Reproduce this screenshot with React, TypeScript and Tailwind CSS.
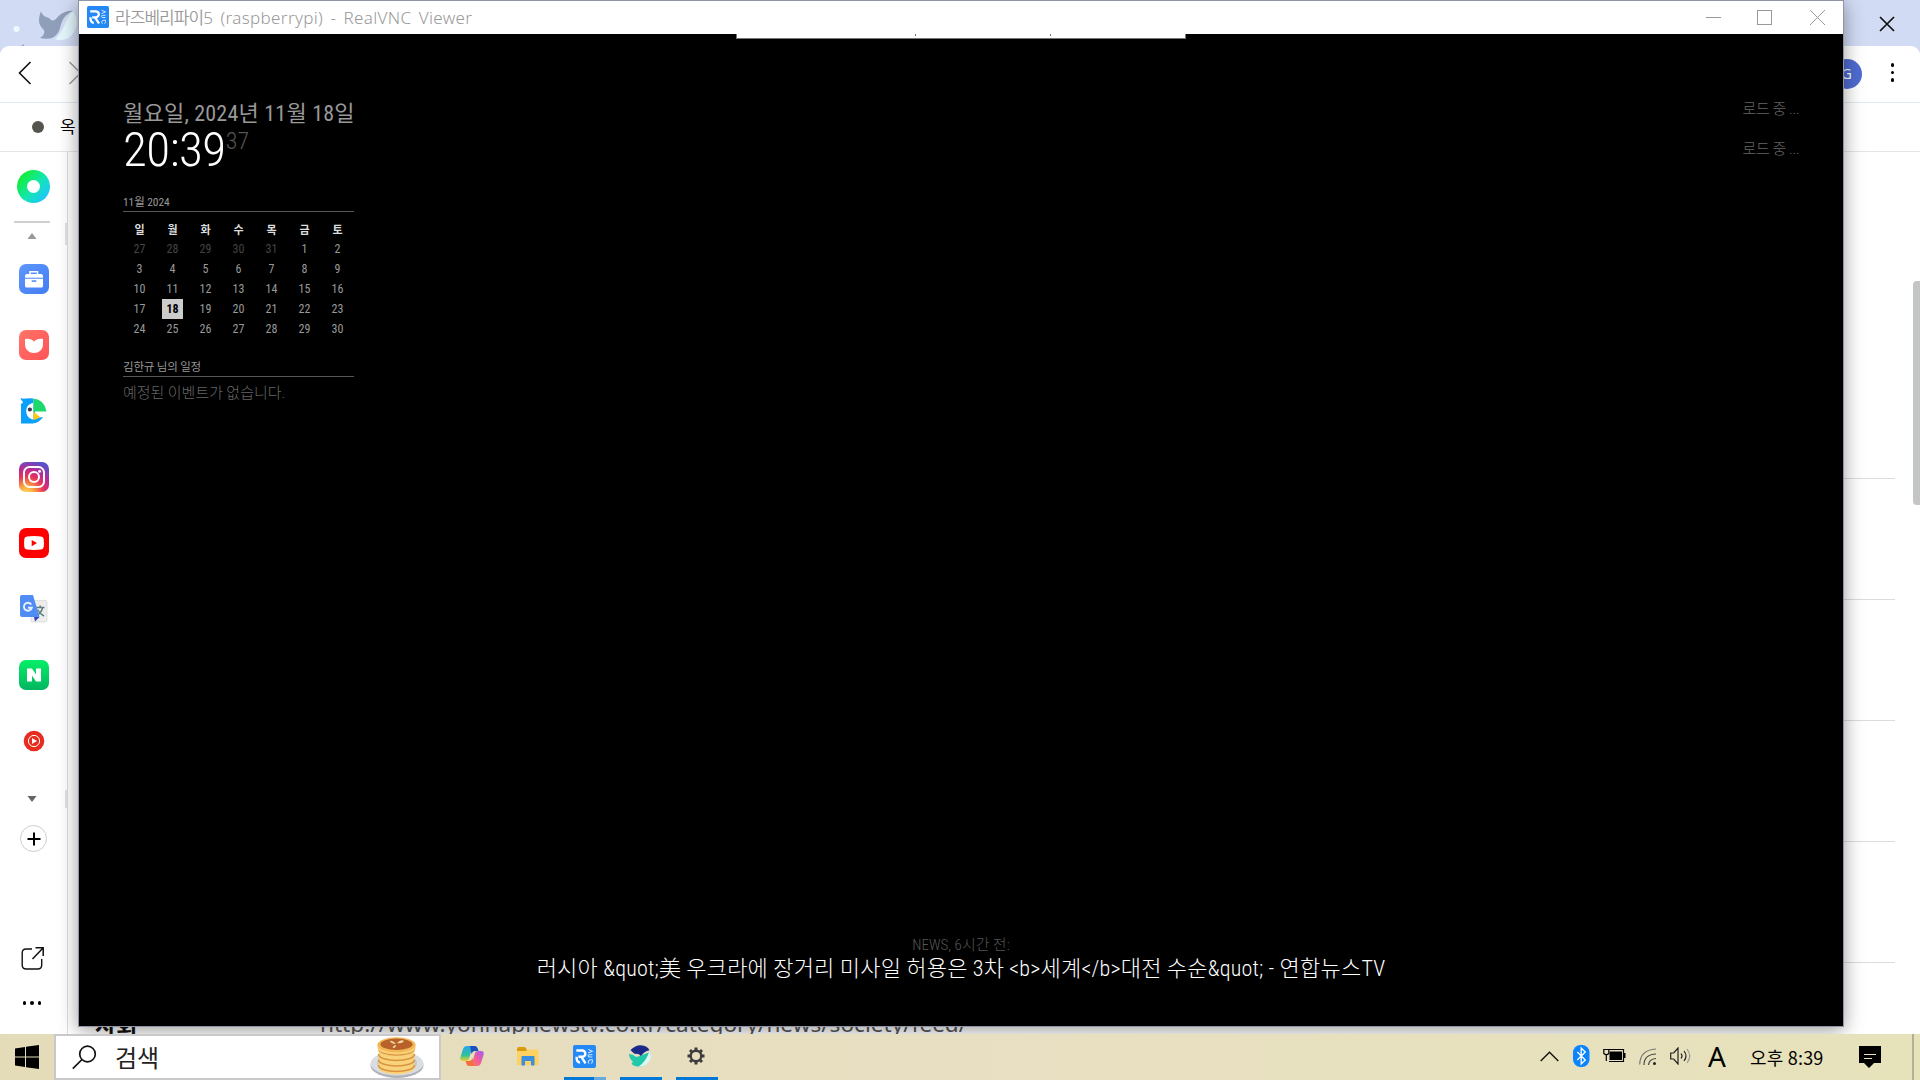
import React from "react";

const cond = "font-['Roboto_Condensed',Roboto,'Noto_Sans_CJK_KR',sans-serif] [font-stretch:75%]";

function VncIcon({ size }: { size: number }) {
  return (
    <svg width={size} height={size} viewBox="0 0 22 22" className="block shrink-0">
      <rect width="22" height="22" rx="1.8" fill="#2489f4" />
      <path d="M3.2 5.3h5.6a2.9 2.9 0 0 1 0 6H5.200M8 11.300l4 6.200M3.400 11.300q0 5.600 3.400 5.600" fill="none" stroke="#fff" strokeWidth="2.300" />
      <path d="M14.500 4.200l4 1.700-4 1.700M18.500 9.300h-2.800q-1.200 0-1.200 1.100t1.200 1.100h2.800M15.500 17.800q-1.500-1.300-.6-2.600t3.600-1v1.500q0 1.500-1 2" fill="none" stroke="#cfe6ff" strokeWidth="1" />
    </svg>
  );
}

function BrowserTop() {
  return (
    <>
      <div className="flex h-[46px] shrink-0 items-center justify-between bg-[#d1dbf3]">
        <svg width="78" height="46" viewBox="0 0 78 46">
          <circle cx="16.500" cy="29" r="3" fill="#e9fbff" />
          <path d="M55 39C64 33 66 16 73 11c8 11 2 28-11 29-3 0-5 0-7-1z" fill="#e4f7fd" />
          <path d="M41 11c-3 8-3 14 3 19 1 4-1 6-4 8 13 3 18-3 20-10 2-8 4-13 13-17-7-1-13 3-17 8-2 2-5 2-7-1-4-1-7-3-8-7z" fill="#8f9eb9" />
          <path d="M20 46q3 0 4-2v2z" fill="#8f9eb9" />
        </svg>
        <svg width="16" height="16" viewBox="0 0 16 16" className="mt-px mr-[25px]">
          <path d="M1 1l14 14M15 1L1 15" stroke="#111" strokeWidth="1.700" />
        </svg>
      </div>
      <div className="h-[57px] shrink-0 bg-[#d1dbf3]">
        <div className="flex h-full items-center justify-between rounded-t-[9px] border-b border-[#e2e8ef] bg-white">
          <svg width="90" height="56" viewBox="0 0 90 56">
            <path d="M30.500 16L19.500 27l11 11" fill="none" stroke="#111" strokeWidth="1.600" />
            <path d="M69.500 16l11 11-11 11" fill="none" stroke="#999" strokeWidth="1.400" />
          </svg>
          <div className="mr-[26px] mb-[1px] flex items-center gap-7">
            <div className="mr-px flex h-[30px] w-[30px] items-center justify-center rounded-full bg-[#4f6bd0] font-['Open_Sans'] text-[15px] text-white">G</div>
            <div className="mb-[2px] flex flex-col gap-1">
              <i className="h-[3.500px] w-[3.500px] rounded-full bg-black" />
              <i className="h-[3.500px] w-[3.500px] rounded-full bg-black" />
              <i className="h-[3.500px] w-[3.500px] rounded-full bg-black" />
            </div>
          </div>
        </div>
      </div>
      <div className="flex h-[49px] shrink-0 items-center border-b border-[#e3e5e6] bg-white pl-8">
        <i className="h-3 w-3 rounded-full bg-[#55544f]" />
        <span className="mb-[3px] ml-4 text-[17px] text-black">옥</span>
      </div>
    </>
  );
}

function Slot({ children }: { children: React.ReactNode }) {
  return <div className="flex h-[66px] w-[68px] shrink-0 items-center justify-center">{children}</div>;
}

function Sidebar() {
  return (
    <div className="flex w-[68px] shrink-0 flex-col border-r border-[#dedede] bg-white">
      <svg width="33" height="33" viewBox="0 0 33 33" className="mt-[18px] ml-[17px] shrink-0">
        <defs>
          <linearGradient id="ring" x1="0.1" y1="0.15" x2="0.9" y2="0.85">
            <stop offset=".1" stopColor="#12ed43" />
            <stop offset=".55" stopColor="#13e6b3" />
            <stop offset="1" stopColor="#1ec4ff" />
          </linearGradient>
        </defs>
        <circle cx="16.500" cy="16.500" r="16.500" fill="url(#ring)" />
        <circle cx="16.500" cy="16.500" r="6.500" fill="#fff" />
      </svg>
      <i className="mt-[18px] ml-[14px] block h-[2px] w-9 shrink-0 bg-[#cfcfcf]" />
      <div className="flex h-[23px] shrink-0 items-start justify-between">
        <svg width="10" height="6" className="mt-[10px] ml-[27px]"><path d="M5 0l4.500 6h-9z" fill="#999" /></svg>
        <i className="h-[22px] w-[2px] bg-[#e2e2e2]" />
      </div>
      <Slot>
        <svg width="30" height="30">
          <defs><linearGradient id="case" x1="0" y1="0" x2="1" y2="1"><stop stopColor="#5f96fb" /><stop offset="1" stopColor="#427df5" /></linearGradient></defs>
          <rect width="30" height="30" rx="7" fill="url(#case)" />
          <path d="M11 10V7.800h7.500V10" fill="none" stroke="#fff" strokeWidth="1.500" />
          <path d="M6 12q0-2 2-2h14q2 0 2 2v2H6zM6 14.700h18V22q0 1.500-1.500 1.500h-15Q6 23.500 6 22z" fill="#fff" />
          <path d="M6 14h18" stroke="#7ba8fb" strokeWidth=".8" />
          <rect x="12.700" y="16.300" width="4.600" height="1.500" fill="#4a86f7" />
        </svg>
      </Slot>
      <Slot>
        <svg width="30" height="30">
          <defs><linearGradient id="coral" x1="0" y1="0" x2="1" y2="1"><stop stopColor="#ff7467" /><stop offset="1" stopColor="#ff5358" /></linearGradient></defs>
          <rect width="30" height="30" rx="7" fill="url(#coral)" />
          <path d="M6 9c4-.5 7 .3 9 2.800 2-2.500 5-3.300 9-2.800v5c0 12-18 12-18 0z" fill="#fff" />
        </svg>
      </Slot>
      <Slot>
        <svg width="30" height="30">
          <path d="M1.500 2q2 1 5.500.6Q10.500 2.200 14.500 2.500V6.500L17 22l7-1q-3.500 5.500-10 6.500H2V8q1.500-.5 2-2-2-1.500-2.500-4z" fill="#0aa0fb" />
          <path d="M14.500 7v16.500C5 22.500 4.500 8 14.500 7z" fill="#fff" />
          <path d="M14.500 2.500q11 1 13 13h-13z" fill="#1fd86d" />
          <path d="M14.500 15.500l6.500 5.500q-3 2.500-6.500 3z" fill="#ffc90c" />
          <circle cx="10.900" cy="13.500" r="2.100" fill="#3c3554" />
        </svg>
      </Slot>
      <Slot>
        <svg width="30" height="30">
          <defs>
            <radialGradient id="insta" cx=".25" cy="1.050" r="1.100">
              <stop offset="0" stopColor="#ffe061" /><stop offset=".25" stopColor="#fba03f" /><stop offset=".52" stopColor="#e83458" /><stop offset=".75" stopColor="#b92a94" /><stop offset="1" stopColor="#5b4fcb" />
            </radialGradient>
          </defs>
          <rect width="30" height="30" rx="7" fill="url(#insta)" />
          <rect x="5" y="5" width="20" height="20" rx="5.500" fill="none" stroke="#fff" strokeWidth="2" />
          <circle cx="15" cy="15" r="5" fill="none" stroke="#fff" strokeWidth="2" />
          <circle cx="20.600" cy="9.400" r="1.400" fill="#fff" />
        </svg>
      </Slot>
      <Slot>
        <svg width="30" height="30">
          <rect width="30" height="30" rx="7" fill="#fe0000" />
          <path d="M8 8.500q7-.8 14 0 2.500.3 2.700 2.500.5 4 0 8-.2 2.200-2.700 2.500-7 .8-14 0-2.500-.3-2.700-2.500-.5-4 0-8Q5.500 8.800 8 8.500z" fill="#fff" />
          <path d="M12.700 12v6.200l5.300-3.100z" fill="#f00" />
        </svg>
      </Slot>
      <Slot>
        <svg width="30" height="30">
          <rect x="12" y="6.500" width="16" height="21.500" rx="1.500" fill="#eceded" stroke="#d6d6d6" strokeWidth=".7" />
          <path d="M17 13.500h8.500M21.200 11.500v2M23.700 13.500q-1.500 6-7 8.500M18.500 15.500q2 4 6.500 6.500" stroke="#607d80" strokeWidth="1.500" fill="none" />
          <path d="M15 23h5.500L16 27.500z" fill="#3a43b8" />
          <path d="M3 1h11l6.500 22H3q-2 0-2-2V3q0-2 2-2z" fill="#4f8df5" />
          <path d="M12.300 10.500a4 4 0 1 0 .5 3.300h-3.800" fill="none" stroke="#e8f0fe" strokeWidth="1.900" />
        </svg>
      </Slot>
      <Slot>
        <svg width="30" height="30">
          <defs><linearGradient id="nv" x1="0" y1="0" x2="0" y2="1"><stop stopColor="#05ee67" /><stop offset="1" stopColor="#03b561" /></linearGradient></defs>
          <rect width="30" height="30" rx="7" fill="url(#nv)" />
          <path d="M8 8.500h5l4 6v-6h5v13h-5l-4-6v6H8z" fill="#fff" />
        </svg>
      </Slot>
      <Slot>
        <svg width="22" height="22">
          <circle cx="11" cy="11" r="10.300" fill="#e62d20" />
          <circle cx="11" cy="11" r="5.600" fill="none" stroke="#fff" strokeWidth="1" />
          <path d="M9 8v6l5-3z" fill="#fff" />
        </svg>
      </Slot>
      <div className="mt-4 flex h-[18px] shrink-0 items-center justify-between">
        <svg width="10" height="6" className="ml-[27px]"><path d="M5 6l4.500-6h-9z" fill="#666" /></svg>
        <i className="h-[18px] w-[2px] bg-[#e2e2e2]" />
      </div>
      <div className="mt-[17px] ml-5 flex h-[27px] w-[27px] shrink-0 items-center justify-center rounded-full border border-[#cdcdcd]">
        <svg width="14" height="14"><path d="M7 0.500v13M.5 7h13" stroke="#000" strokeWidth="2" /></svg>
      </div>
      <svg width="24" height="24" className="mt-[95px] ml-[21px] shrink-0">
        <path d="M11 2H5Q1.200 2 1.200 6v12q0 4 4 4h11.500q4 0 4-4v-6" fill="none" stroke="#111" strokeWidth="1.400" />
        <path d="M14.500.8h7.700V9M22 1L11.500 12" fill="none" stroke="#111" strokeWidth="1.500" />
      </svg>
      <div className="mt-[30px] ml-[22.500px] flex gap-1">
        <i className="h-[3.500px] w-[3.500px] rounded-full bg-black" />
        <i className="h-[3.500px] w-[3.500px] rounded-full bg-black" />
        <i className="h-[3.500px] w-[3.500px] rounded-full bg-black" />
      </div>
    </div>
  );
}

function Page() {
  return (
    <div className="flex min-w-0 flex-1 justify-between bg-white">
      <div className="flex flex-1 flex-col pl-[27px]">
        {[0, 1, 2, 3, 4].map((i) => (
          <div key={i} className={i === 0 ? "h-[327px] w-[1800px] shrink-0 border-b border-[#dcdcdc]" : "h-[121px] w-[1800px] shrink-0 border-b border-[#dcdcdc]"} />
        ))}
        <div className="mt-[45px] flex h-[32px] shrink-0 leading-[32px] whitespace-nowrap">
          <b className="w-[225px] text-[23px] text-[#111]">사회</b>
          <span className="font-['Noto_Sans'] text-[22.600px] text-[#555]">http://www.yonhapnewstv.co.kr/category/news/society/feed/</span>
        </div>
      </div>
      <div className="w-[7px] pt-[129px]">
        <div className="h-[224px] w-[7px] rounded-l bg-[#c4c5c7]" />
      </div>
    </div>
  );
}

const days = ["일", "월", "화", "수", "목", "금", "토"];
const dates = [27, 28, 29, 30, 31, ...Array.from({ length: 30 }, (_, i) => i + 1)];

function VncWindow() {
  return (
    <div className="absolute top-0 left-[78px] flex h-[1027px] w-[1766px] flex-col border border-[#9095a5] bg-black shadow-[0_3px_18px_rgba(0,0,0,0.4)]">
      <div className="flex h-[33px] shrink-0 items-center bg-white pl-2">
        <div className="-mt-[1px]"><VncIcon size={22} /></div>
        <span className="ml-[6px] pb-[1px] text-[17px] font-[350] whitespace-pre text-[#999]">
          <span className="tracking-[-0.950px]">라즈베리파이</span>
          <span className="font-['Noto_Sans'] text-[17px] tracking-[0.350px] [word-spacing:2.500px]">5 (raspberrypi) - RealVNC Viewer</span>
        </span>
        <svg width="122" height="17" className="mr-[16px] ml-auto" fill="none" stroke="#999">
          <path d="M1 8.500h15" />
          <rect x="52.500" y="1.500" width="14" height="14" />
          <path d="M105 1l15 15M120 1l-15 15" />
        </svg>
      </div>
      <div className="mx-auto flex h-[5px] w-[450px] shrink-0 border-x border-b border-[#777] bg-white">
        <i className="ml-[178px] h-[2px] w-px bg-[#777]" />
        <i className="ml-[134px] h-[2px] w-px bg-[#777]" />
      </div>
      <div className="flex flex-1 flex-col px-11 pt-[59px]">
        <div className="flex justify-between">
          <div className={`w-[231px] ${cond}`}>
            <div className="h-[29px] text-[22px] leading-[31px] tracking-[0.220px] whitespace-nowrap text-[#999]">월요일, 2024년 11월 18일</div>
            <div className="flex h-[45px] items-start whitespace-nowrap">
              <span className="text-[49px] leading-[45px] font-light tracking-[-0.500px] text-white">20:39</span>
              <span className="text-[24px] leading-[28px] font-light text-[#555]">37</span>
            </div>
            <div className="mt-[22px] h-[18px] border-b border-[#555] text-[11.500px] leading-[17px] tracking-[-0.080px] text-[#999]">11월 2024</div>
            <div className="mt-[9px] grid grid-cols-7 text-center text-[12px] leading-[20px] text-[#999]">
              {days.map((d) => (
                <span key={d} className="h-[18px] text-[11px] font-bold text-[#ddd]">{d}</span>
              ))}
              {dates.map((d, i) => (
                <span key={i} className={i < 5 ? "text-[#444]" : d === 18 ? "mx-[6px] bg-[#ccc] font-bold text-black" : ""}>{d}</span>
              ))}
            </div>
            <div className="mt-[19px] h-[19px] border-b border-[#555] text-[11.500px] leading-[18px] tracking-[-0.150px] text-[#999]">김한규 님의 일정</div>
            <div className="mt-[5px] text-[15px] leading-[22px] font-light text-[#666]">예정된 이벤트가 없습니다.</div>
          </div>
          <div className={`flex flex-col gap-[18px] text-right text-[15px] leading-[22px] font-light tracking-[-0.300px] text-[#666] ${cond}`}>
            <span>로드 중 ...</span>
            <span>로드 중 ...</span>
          </div>
        </div>
        <div className={`mt-auto mb-[44px] text-center whitespace-nowrap ${cond}`}>
          <div className="text-[15px] leading-[19px] font-light text-[#555]">NEWS, 6시간 전:</div>
          <div className="text-[22px] leading-[27px] font-light tracking-[0.210px] text-white">{"러시아 &quot;美 우크라에 장거리 미사일 허용은 3차 <b>세계</b>대전 수순&quot; - 연합뉴스TV"}</div>
        </div>
      </div>
    </div>
  );
}

function Pancakes() {
  return (
    <svg width="54" height="42" viewBox="0 0 54 42">
      <ellipse cx="27" cy="28.500" rx="26.500" ry="12.500" fill="#aeb2ba" />
      <ellipse cx="27" cy="26.500" rx="26.500" ry="12" fill="#d9dce1" />
      <ellipse cx="27" cy="26" rx="20" ry="9" fill="#c4c8cf" />
      {[27, 21.5, 16, 10.5].map((y) => (
        <g key={y}>
          <path d={`M8.500 ${y}v3.500c0 9 36 9 36 0V${y}z`} fill="#f9d37c" />
          <path d={`M8.500 ${y + 1}c0 8.500 36 8.500 36 0`} fill="none" stroke="#d99340" strokeWidth="1.500" />
        </g>
      ))}
      <path d="M7.500 7.500v3.500c0 8.500 38 8.500 38 0V7.500z" fill="#f9cf74" />
      <ellipse cx="26.500" cy="7.800" rx="19" ry="7.500" fill="#f1b656" />
      <ellipse cx="26.500" cy="7.300" rx="16" ry="5.700" fill="#b8622a" />
      <path d="M26 7q-4-4-6-3 1 3 6 3zM27 6q4-4 7-2-2 3-7 2zM26 8q-4 1-3 3 3 0 3-3z" fill="#f2d9a2" />
    </svg>
  );
}

function Taskbar() {
  return (
    <div className="relative z-10 flex h-[46px] shrink-0 bg-linear-to-r from-[#e4dcb9] via-[#e8dfc2] to-[#e6e2ba]">
      <svg width="24" height="24" className="mt-[11px] ml-[15px]">
        <path d="M0 3.500l10-1.500v9.500H0zM11 1.800L24 0v11.500H11zM0 12.500h10V22L0 20.500zM11 12.500h13V24l-13-1.800z" />
      </svg>
      <div className="ml-[15px] flex h-[46px] w-[387px] items-center border-2 border-[#c9c9cc] bg-white">
        <svg width="25" height="25" className="ml-4" fill="none" stroke="#111" strokeWidth="1.700">
          <circle cx="15.500" cy="9" r="7.800" />
          <path d="M10 14.500L.8 23.700" />
        </svg>
        <span className="ml-[18px] text-[24px] text-[#222]">검색</span>
        <div className="mt-px mr-[15px] ml-auto"><Pancakes /></div>
      </div>
      <svg width="24" height="22" viewBox="0 0 24 22" className="mt-[11px] ml-[19px]">
        <defs>
          <linearGradient id="cpa" x1="0" y1="0" x2="0" y2="1"><stop stopColor="#2ba5ef" /><stop offset=".6" stopColor="#2ac0a0" /><stop offset="1" stopColor="#f3cf25" /></linearGradient>
          <linearGradient id="cpb" x1="1" y1="0" x2="0" y2="1"><stop stopColor="#a45cf0" /><stop offset=".5" stopColor="#ef5c9c" /><stop offset="1" stopColor="#ff824c" /></linearGradient>
        </defs>
        <path d="M7 1h8q-3 2-4 6L9 14q-.6 2-3 2H3q-3.500 0-2.500-4L3 4q1-3 4-3z" fill="url(#cpa)" />
        <path d="M10 1h5q2 0 2.700 2.500L18.500 6H15q-2.500 0-3.500 3z" fill="#1a4fbd" />
        <path d="M17 21H9q3-2 4-6l2-7q.6-2 3-2h3q3.500 0 2.500 4L21 18q-1 3-4 3z" fill="url(#cpb)" />
        <path d="M14 21H9q-2 0-2.700-2.500L5.500 16H9q2.500 0 3.500-3z" fill="#f5703f" />
      </svg>
      <svg width="22" height="19" viewBox="0 0 22 19" className="mt-[13px] ml-[33px]">
        <path d="M0 2q0-2 2-2h6l2 3v3H0z" fill="#dc9a0a" />
        <path d="M0 4h9l1.500-1.500H20q1.500 0 1.500 1.500v14H0z" fill="#ffd160" />
        <path d="M4.500 18.500V10q0-1 1-1h11q1 0 1 1v8.500H14V14H8v4.500z" fill="#3c8fdc" />
      </svg>
      <div className="ml-[25px] flex w-[42px] flex-col items-center justify-between pt-[11px]">
        <div className="mr-[2px]"><VncIcon size={23} /></div>
        <div className="flex h-[3px] w-full"><i className="h-full w-[30px] bg-[#0078d7]" /><i className="h-full w-3 bg-[#66abe0]" /></div>
      </div>
      <div className="ml-[14px] flex w-[42px] flex-col items-center justify-between pt-[11px]">
        <svg width="22" height="22" viewBox="0 0 22 22" className="mr-[2px]">
          <path d="M0 9q4 0 7 3l4-1 10-4q2 5-1 9-4 6-11 5.500Q4 21 2.500 18.500L4 17Q0 13 0 9z" fill="#20c9a9" />
          <path d="M1.500 5Q8-1.500 15 .8q4 1 5.500 4.500Q15 6.500 12 11q-3-3-6-2-3-2-4.500-4z" fill="#1b2a8a" />
          <path d="M20.500 6q3 6 0 10-4 6-11 5.500Q17 17 20.500 6z" fill="#dff7f4" />
        </svg>
        <i className="h-[3px] w-full bg-[#0078d7]" />
      </div>
      <div className="ml-[14px] flex w-[42px] flex-col items-center justify-between pt-[13px]">
        <svg width="18" height="18" viewBox="0 0 18 18" className="mr-[2px]">
          <g stroke="#3d3d3d" strokeWidth="3">
            <path d="M9 .5v3M9 14.500v3M.5 9h3M14.500 9h3M3 3l2.200 2.200M12.800 12.800L15 15M3 15l2.200-2.200M12.800 5.200L15 3" />
            <circle cx="9" cy="9" r="5.300" fill="none" strokeWidth="2.400" />
          </g>
        </svg>
        <i className="h-[3px] w-full bg-[#0078d7]" />
      </div>
      <div className="ml-auto flex h-[46px]">
        <svg width="19" height="11" className="mt-[17px]" fill="none" stroke="#111" strokeWidth="1.400"><path d="M.7 10L9.500 1.200 18.300 10" /></svg>
        <svg width="17" height="22" className="mt-[11px] ml-[14px]">
          <rect width="16.500" height="22" rx="7.500" fill="#0a84ff" />
          <path d="M4.300 7l8 8-4.100 4V3l4.100 4-8 8" fill="none" stroke="#fff" strokeWidth="1.300" />
        </svg>
        <svg width="23" height="16" className="mt-[14px] ml-[13px]">
          <path d="M5 1.500h15.500v12H6" fill="none" stroke="#000" strokeWidth="1.200" />
          <path d="M6.500 3.500h12.500v8.500H6.500z" />
          <rect x="20.500" y="5" width="2" height="5" />
          <path d="M.8 1.500h5V5.500q-2.500 2.500-5 0zM3.300 7v6" fill="#e8e0be" stroke="#000" strokeWidth="1.200" />
        </svg>
        <svg width="18" height="18" className="mt-[14px] ml-[13px]" fill="none" stroke="#444" strokeWidth="1.200">
          <path d="M.7 16.500Q1 2 17 1" stroke="#777" />
          <path d="M5 17Q5 6.500 17 6" />
          <path d="M9.500 17Q10 11 17 10.500" />
          <circle cx="15.500" cy="15.500" r="1.500" fill="#222" stroke="none" />
        </svg>
        <svg width="22" height="18" className="mt-[13px] ml-[13px]" fill="none" stroke="#222" strokeWidth="1.200">
          <path d="M.7 6h3L8 1v16l-4.300-5h-3z" />
          <path d="M11 6.500q2 2.500 0 5" /><path d="M14 4q4 5 0 10" /><path d="M17 2q5.500 7 0 14" stroke="#999" />
        </svg>
        <span className="-mt-px ml-4 w-[20px] font-['Noto_Sans'] text-[28px] leading-[46px] text-black">A</span>
        <span className="ml-[22px] w-[76px] text-[18px] leading-[46px] tracking-[0.200px] whitespace-nowrap text-black">오후 8:39</span>
        <svg width="22" height="22" className="mt-3 ml-[33px]">
          <path d="M0 0h22v17h-7l-5 5-5-5H0z" />
          <path d="M5 8.500h12M5 12.500h8" stroke="#ece2bd" strokeWidth="1.200" />
        </svg>
        <i className="ml-[31px] h-full w-[2px] bg-[#b5af94]" />
        <i className="w-[6px]" />
      </div>
    </div>
  );
}

export default function App() {
  return (
    <div className="relative flex h-[1080px] w-[1920px] flex-col overflow-hidden bg-white font-['Noto_Sans_CJK_KR',sans-serif]">
      <BrowserTop />
      <div className="flex min-h-0 flex-1 overflow-hidden">
        <Sidebar />
        <Page />
      </div>
      <VncWindow />
      <Taskbar />
    </div>
  );
}
